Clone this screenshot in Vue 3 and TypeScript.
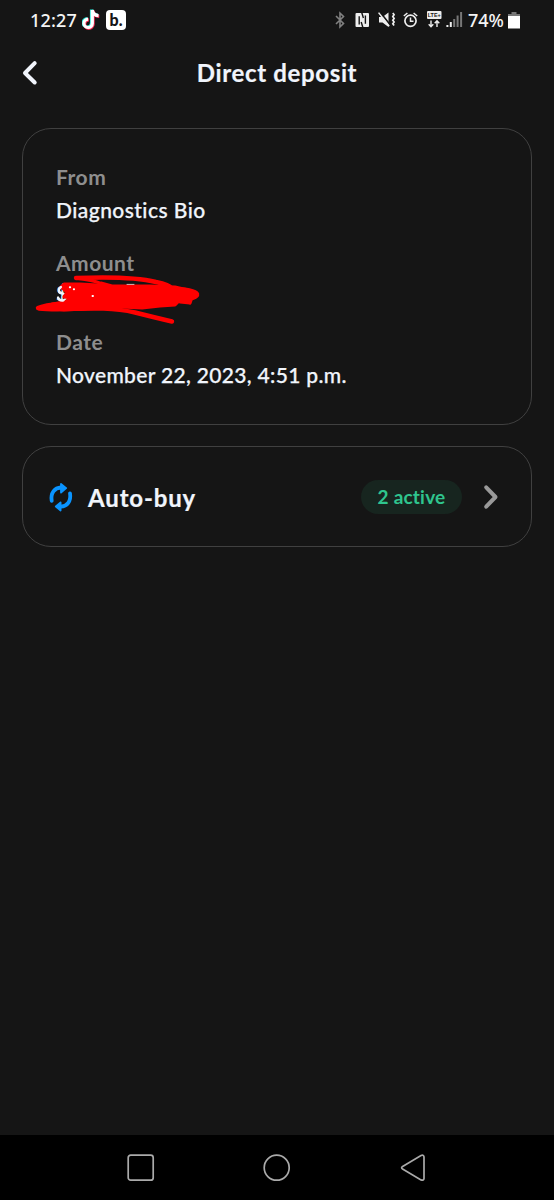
<script setup lang="ts">
interface Detail {
  label: string
  value: string
  kind: string
  redacted?: boolean
}

const details: Detail[] = [
  { label: 'From', value: 'Diagnostics Bio', kind: 'from' },
  { label: 'Amount', value: '$', kind: 'amount', redacted: true },
  { label: 'Date', value: 'November 22, 2023, 4:51 p.m.', kind: 'date' },
]
</script>

<template>
  <main class="screen">
    <header class="status">
      <span class="clock">12:27</span>
      <svg class="tiktok" width="18" height="22" viewBox="0 0 18 22" fill="none" stroke-width="3.2">
        <path d="M10.3 1v13.4a4.2 4.2 0 1 1-4.2-4.3M10.3 1c.4 3.4 2.9 5.4 6.2 5.6" stroke="#25e6d8" transform="translate(-.8 -.5)" />
        <path d="M10.3 1v13.4a4.2 4.2 0 1 1-4.2-4.3M10.3 1c.4 3.4 2.9 5.4 6.2 5.6" stroke="#fe2c55" transform="translate(.8 .8)" />
        <path d="M10.3 1v13.4a4.2 4.2 0 1 1-4.2-4.3M10.3 1c.4 3.4 2.9 5.4 6.2 5.6" stroke="#fff" />
      </svg>
      <span class="app-badge">b.</span>
      <svg class="system" width="130" height="24" viewBox="333 8 130 24" fill="none">
        <path d="M336 16l7.5 7.5-3.5 3.3V13.2l3.5 3.3L336 24" stroke="#808080" stroke-width="1.6" />
        <rect x="355.5" y="13" width="13.5" height="14" rx="1" fill="#eee" />
        <path d="M359.2 16.2v8.4M365.4 15.4v8.4M361.8 12.8l1.6 5.2M362.8 27.2l-1.6-5.2" stroke="#151515" stroke-width="1.4" />
        <path d="M379 17h3.5l6-4.5V27l-6-4.5H379z" fill="#eee" />
        <path d="M380 12l11 14" stroke="#151515" stroke-width="1.8" />
        <path d="M378.6 12.6l10.6 13.6" stroke="#eee" stroke-width="1.5" />
        <path d="M392.8 13l1.3 1.8-1.3 1.8 1.3 1.8-1.3 1.8 1.3 1.8-1.3 1.8 1.3 1.8" stroke="#eee" stroke-width="1.7" />
        <circle cx="410.5" cy="20.8" r="5.6" stroke="#eee" stroke-width="1.7" />
        <path d="M410.5 17.5v3.8h3M403.8 16l3.6-3M417.2 16l-3.6-3" stroke="#eee" stroke-width="1.5" />
        <rect x="427" y="11" width="14.5" height="8" rx="1" fill="#eee" />
        <text x="434.2" y="17.2" class="lte">LTE+</text>
        <path d="M431 20.5v6M428.7 24.2l2.3 2.5 2.3-2.5M437 27v-6M434.7 23.3l2.3-2.5 2.3 2.5" stroke="#eee" stroke-width="1.4" />
        <path d="M447.4 27v-2M450.8 27v-5" stroke="#eee" stroke-width="2" />
        <path d="M454.2 27v-8M457.6 27v-11.5M461.1 27V12" stroke="#777" stroke-width="2" />
      </svg>
      <span class="percent">74%</span>
      <svg class="battery" width="12" height="18" viewBox="0 0 12 18">
        <path d="M3.5 1h5v2H12v3H0V3h3.5z" fill="#777" />
        <path d="M0 5h12v12.5H0z" fill="#fff" />
      </svg>
    </header>

    <nav class="topbar">
      <svg class="back" width="18" height="28" viewBox="0 0 18 28" fill="none">
        <path d="M14.7 4.2L5 14l9.7 9.5" stroke="#f1f5fc" stroke-width="4" stroke-linecap="round" stroke-linejoin="round" />
      </svg>
      <h1><span class="title">Direct deposit</span></h1>
    </nav>

    <section class="card details">
      <div v-for="item in details" :key="item.label" class="detail" :class="item.kind">
        <div class="label"><span>{{ item.label }}</span></div>
        <div class="value"><span>{{ item.value }}</span></div>
        <svg v-if="item.redacted" class="scribble" width="170" height="54" viewBox="34 272 170 54" fill="none" stroke="#f00" stroke-linecap="round" stroke-linejoin="round">
          <path d="M64 284L80 284L98 285L101 283L112 286L150 286L175 287L188 290L196 294L189 298L179 301L175 305L160 306L142 308L100 306L84 309L64 310L48 308L52 304L65 302L72 298L64 297L67 292L61 287Z" fill="#f00" stroke-width="3" />
          <path d="M76 278C102 277 136 277 156 282C166 284 170 286 171 288M38 308C46 304 62 304 78 302M39 308.5C67 311.5 99 304.5 135 312.5C147 315.5 159 318.5 172 321.5M168 289C181 289 195 290 197 294C198 299 183 299 173 301" stroke-width="4.4" />
          <path d="M76 278C86 280 96 280 101 284M180 302L190 303L191 300M190 303L181 298" stroke-width="3.2" />
          <path d="M127 284.4h7" stroke="#d9b6b6" stroke-width="1" />
          <path d="M69.8 287.3h.4M73.8 289.3h.3M92.5 296h.5" stroke="#fff" stroke-width="1.9" />
          <path d="M61 287C58 289 58 293 62 293.5M58 297.5C59 300 61 301 63.5 300.5" stroke="#f1f5fc" stroke-width="2.2" />
        </svg>
      </div>
    </section>

    <section class="card autobuy">
      <svg class="cycle" width="26" height="32" viewBox="48 481 26 32" fill="none">
        <path d="M51.7 500.8C50.4 493 54.5 487.8 61 487.5M70 493.3c1.3 7.8-2.8 13-9.3 13.3" stroke="#0a94ff" stroke-width="3.8" stroke-linecap="round" />
        <path d="M61 484l5.2 4.1-5.2 4.5zM60.6 502.5l-4.8 4 4.8 4z" fill="#0a94ff" stroke="#0a94ff" stroke-width="1.8" stroke-linejoin="round" />
      </svg>
      <span class="autobuy-name">Auto-buy</span>
      <span class="pill"><span>2 active</span></span>
      <svg class="chevron" width="18" height="28" viewBox="0 0 18 28" fill="none">
        <path d="M4.2 4.3l9.3 9.7-9.3 9.7" stroke="#999" stroke-width="4" stroke-linecap="round" stroke-linejoin="round" />
      </svg>
    </section>

    <footer class="softkeys">
      <svg width="30" height="30" viewBox="0 0 30 30"><rect x="2.2" y="2.2" width="25" height="25" rx="2.5" /></svg>
      <svg width="30" height="30" viewBox="0 0 30 30"><circle cx="14.7" cy="14.7" r="12.5" /></svg>
      <svg width="30" height="30" viewBox="0 0 30 30"><path d="M4.6 13.5L23 2.5q3-1 3 1.6v21.4q-.2 2.4-3 1.4L4.6 16.1q-2-1.3 0-2.6z" /></svg>
    </footer>
  </main>
</template>

<style>
body {
  margin: 0;
  background: #151515;
}
</style>

<style scoped>
.screen {
  box-sizing: border-box;
  width: 554px;
  height: 1200px;
  display: flex;
  flex-direction: column;
  background: #151515;
  color: #f1f5fc;
  font-family: Lato, "Liberation Sans", sans-serif;
  font-variant-ligatures: none;
}
svg {
  display: block;
  flex: none;
}
.status {
  height: 40px;
  display: flex;
  align-items: center;
  padding-left: 30px;
  font-family: "Noto Sans", sans-serif;
  font-size: 18px;
  font-weight: 500;
  color: #f4f4f4;
}
.clock {
  width: 52px;
  white-space: nowrap;
  letter-spacing: 0.15px;
}
.app-badge {
  width: 20px;
  height: 20px;
  margin-left: 6px;
  border-radius: 4px;
  background: #fff;
  color: #151515;
  font: 900 16px/19px Lato, sans-serif;
  text-align: center;
}
.system {
  margin-left: 207px;
}
.lte {
  font: 700 5.4px "Liberation Sans", sans-serif;
  fill: #151515;
  text-anchor: middle;
}
.percent {
  width: 40px;
  margin-left: 5px;
}
.topbar {
  height: 66px;
  display: grid;
  grid-template-columns: 40px 1fr 40px;
  align-items: center;
  padding: 0 20px;
  margin-bottom: 22px;
}
h1 {
  margin: 0;
  font-size: 24px;
  line-height: 32px;
  font-weight: 700;
  letter-spacing: 0.65px;
  text-align: center;
}
.title,
.autobuy-name {
  -webkit-text-stroke: 0.2px currentColor;
}
.card {
  box-sizing: border-box;
  margin: 0 22px;
  border: 1.5px solid #404040;
  border-radius: 29px;
}
.details {
  height: 297px;
  padding: 32px 33px;
}
.detail {
  position: relative;
  height: 86px;
  white-space: nowrap;
}
.amount {
  height: 79px;
}
.label,
.value {
  height: 32px;
  line-height: 32px;
  font-size: 21px;
}
.label {
  color: #8e8e8e;
  font-weight: 700;
  letter-spacing: 0.5px;
}
.value {
  padding-top: 1px;
  font-weight: 500;
  letter-spacing: 0.33px;
  -webkit-text-stroke: 0.25px currentColor;
}
.from .value {
  letter-spacing: 0.45px;
}
.amount .value {
  margin-top: -3px;
}
.scribble {
  position: absolute;
  left: -22px;
  top: 25px;
}
.autobuy {
  height: 101px;
  margin-top: 21px;
  display: flex;
  align-items: center;
  padding: 0 31px 0 25px;
}
.autobuy-name {
  margin-left: 14px;
  padding-top: 2px;
  font-size: 24px;
  line-height: 32px;
  font-weight: 700;
  letter-spacing: 0.85px;
}
.pill {
  box-sizing: border-box;
  width: 101px;
  height: 34px;
  margin-left: auto;
  border-radius: 17px;
  background: #17251f;
  color: #2fc58e;
  font-size: 19px;
  line-height: 34px;
  font-weight: 700;
  letter-spacing: 0.2px;
  text-align: center;
}
.chevron {
  margin-left: 20px;
}
.softkeys {
  box-sizing: border-box;
  height: 65px;
  margin-top: auto;
  padding: 0 126px;
  display: flex;
  align-items: center;
  justify-content: space-between;
  background: #000;
}
.softkeys svg {
  fill: none;
  stroke: #aaa;
  stroke-width: 1.7;
}
</style>
